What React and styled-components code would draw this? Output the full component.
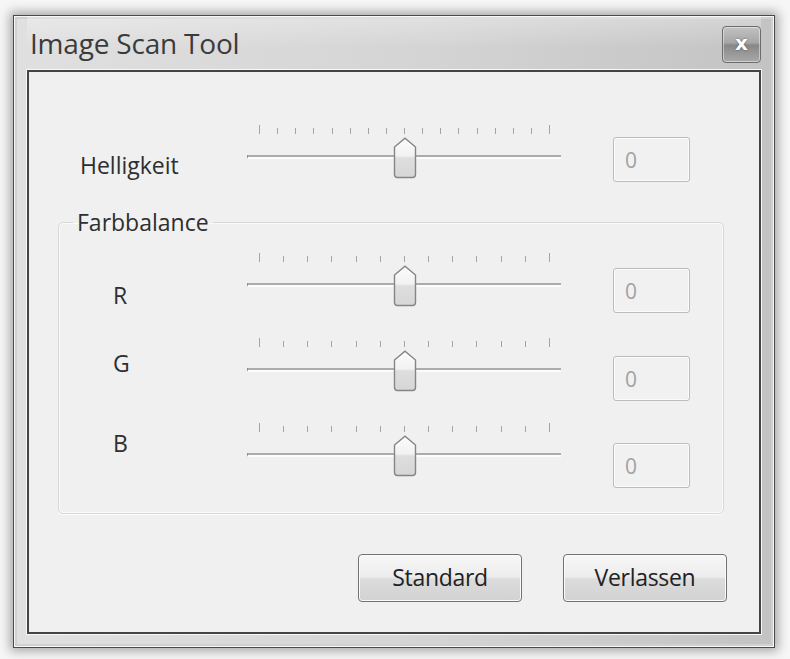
import React from 'react';
import styled, { createGlobalStyle } from 'styled-components';

const GlobalStyle = createGlobalStyle`
  html, body { margin: 0; padding: 0; }
  body {
    background: #f6f6f6;
    font-family: "Open Sans", "Noto Sans", sans-serif;
    color: #2c2c2c;
  }
`;

const Page = styled.div`
  width: 790px;
  height: 659px;
  box-sizing: border-box;
  padding: 15px 15px 11px 13px;
  display: flex;
`;

const Window = styled.div`
  flex: 1;
  display: flex;
  flex-direction: column;
  box-sizing: border-box;
  border: 1px solid #4a4a4a;
  padding: 0 13px 13px 13px;
  background: linear-gradient(to right, #e0e0e0 0%, #d4d4d4 55%, #c3c3c3 100%);
  box-shadow: 0 0 10px 3px rgba(0, 0, 0, 0.33), inset 0 0 0 1px #f6f6f6, inset 0 0 0 3px #d0d0d0;
`;

const TitleBar = styled.div`
  height: 54px;
  display: flex;
  align-items: center;
  justify-content: space-between;
  padding-left: 3px;
  background: linear-gradient(to bottom, rgba(255,255,255,0.3), rgba(255,255,255,0) 60%);
`;

const Title = styled.span`
  font-size: 28px;
  color: #3b3b3b;
  letter-spacing: -0.2px;
`;

const CloseButton = styled.button`
  align-self: flex-start;
  margin-top: 10px;
  width: 39px;
  height: 37px;
  padding: 0 0 3px;
  border: 1px solid #6c6c6c;
  border-radius: 4px;
  background: linear-gradient(to bottom, #c2c2c2 0%, #a6a6a6 45%, #878787 52%, #a9a9a9 100%);
  box-shadow: inset 0 0 0 1px rgba(255,255,255,0.45);
  color: #fff;
  font-family: "DejaVu Sans", sans-serif;
  font-weight: bold;
  font-size: 20px;
  line-height: 1;
  text-shadow: 0 0 2px rgba(0,0,0,0.5);
`;

const Content = styled.div`
  flex: 1;
  display: flex;
  flex-direction: column;
  border: 2px solid #444;
  box-shadow: 0 0 0 1px #f8f8f8;
  background: #f0f0f0;
  padding: 53px 0 0 29px;
`;

const Row = styled.div`
  display: grid;
  grid-template-columns: ${p => p.$labelWidth}px 366px 77px;
  align-items: start;
  height: 66px;
  margin-left: ${p => p.$indent || 0}px;
`;

const Label = styled.span`
  font-size: 23px;
  line-height: 26px;
  margin-top: ${p => p.$top}px;
  color: #2e2e2e;
`;

const Slider = styled.div`
  position: relative;
  width: 314px;
  height: 56px;
`;

const Ticks = styled.div`
  height: 9px;
  display: flex;
  align-items: flex-end;
  justify-content: space-between;
  padding: 0 11px 0 12px;
`;

const Tick = styled.span`
  width: 1px;
  height: ${p => (p.$edge ? 9 : 6)}px;
  background: #a4a4a4;
`;

const Track = styled.div`
  position: absolute;
  left: 0;
  right: 0;
  top: 30px;
  height: 2px;
  background: #acacac;
  border-bottom: 2px solid #fcfcfc;
  border-left: 1px solid #8e8e8e;
`;

const Thumb = styled.svg`
  position: absolute;
  left: 146px;
  top: 12px;
`;

const ValueBox = styled.div`
  margin-top: ${p => p.$top}px;
  height: 45px;
  box-sizing: border-box;
  display: flex;
  align-items: center;
  padding-left: 11px;
  border: 1px solid #bcbcbc;
  border-radius: 3px;
  box-shadow: inset 0 0 0 1px #fbfbfb;
  background: #f1f1f1;
  font-size: 21px;
  color: #a2a2a2;
`;

const Group = styled.fieldset`
  margin: 18px 0 0 0;
  width: 666px;
  box-sizing: border-box;
  border: 1px solid #d7d7d7;
  border-radius: 5px;
  box-shadow: inset 0 0 0 1px #fafafa, 0 1px 0 #fdfdfd;
  padding: 0;
  min-width: 0;
`;

const Legend = styled.legend`
  margin-left: 14px;
  padding: 0 4px;
  font-size: 23px;
  line-height: 26px;
  color: #2e2e2e;
`;

const GroupRows = styled.div`
  display: flex;
  flex-direction: column;
  gap: 19px;
  padding: 18px 0 24px 54px;
`;

const ButtonRow = styled.div`
  display: flex;
  justify-content: flex-end;
  gap: 41px;
  margin-top: 40px;
  padding-right: 32px;
`;

const Button = styled.button`
  width: 164px;
  height: 48px;
  border: 1px solid #727272;
  border-radius: 4px;
  background: linear-gradient(to bottom, #f7f7f7 0%, #ececec 48%, #dcdcdc 52%, #d2d2d2 100%);
  box-shadow: inset 0 0 0 1px #fbfbfb;
  font-family: "Open Sans", "Noto Sans", sans-serif;
  font-size: 23px;
  color: #222;
  padding: 0 0 2px;
  letter-spacing: -0.3px;
`;

function SliderControl({ ticks }) {
  return (
    <Slider>
      <Ticks>
        {Array.from({ length: ticks }, (_, i) => (
          <Tick key={i} $edge={i === 0 || i === ticks - 1} />
        ))}
      </Ticks>
      <Track />
      <Thumb width="24" height="42" viewBox="0 0 24 42">
        <defs>
          <linearGradient id="thumbFill" x1="0" y1="0" x2="0" y2="1">
            <stop offset="0" stopColor="#fbfbfb" />
            <stop offset="0.45" stopColor="#f2f2f2" />
            <stop offset="0.5" stopColor="#dedede" />
            <stop offset="1" stopColor="#d6d6d6" />
          </linearGradient>
        </defs>
        <path
          d="M1.5 10 L12 1.2 L22.5 10 V37.5 Q22.5 40.5 19.5 40.5 H4.5 Q1.5 40.5 1.5 37.5 Z"
          fill="url(#thumbFill)"
          stroke="#858585"
          strokeWidth="1.4"
        />
        <path d="M3.2 10.8 L12 3.4 L20.8 10.8" fill="none" stroke="#fff" strokeWidth="1" />
      </Thumb>
    </Slider>
  );
}

const channels = [
  { name: 'R', labelTop: 29, boxTop: 15 },
  { name: 'G', labelTop: 12, boxTop: 18 },
  { name: 'B', labelTop: 7, boxTop: 20 },
];

export default function App() {
  return (
    <>
      <GlobalStyle />
      <Page>
        <Window>
          <TitleBar>
            <Title>Image Scan Tool</Title>
            <CloseButton aria-label="Schließen">x</CloseButton>
          </TitleBar>
          <Content>
            <Row $labelWidth={167} $indent={22}>
              <Label $top={27}>Helligkeit</Label>
              <SliderControl ticks={17} />
              <ValueBox $top={12}>0</ValueBox>
            </Row>
            <Group>
              <Legend>Farbbalance</Legend>
              <GroupRows>
                {channels.map(c => (
                  <Row key={c.name} $labelWidth={134}>
                    <Label $top={c.labelTop}>{c.name}</Label>
                    <SliderControl ticks={13} />
                    <ValueBox $top={c.boxTop}>0</ValueBox>
                  </Row>
                ))}
              </GroupRows>
            </Group>
            <ButtonRow>
              <Button>Standard</Button>
              <Button>Verlassen</Button>
            </ButtonRow>
          </Content>
        </Window>
      </Page>
    </>
  );
}
